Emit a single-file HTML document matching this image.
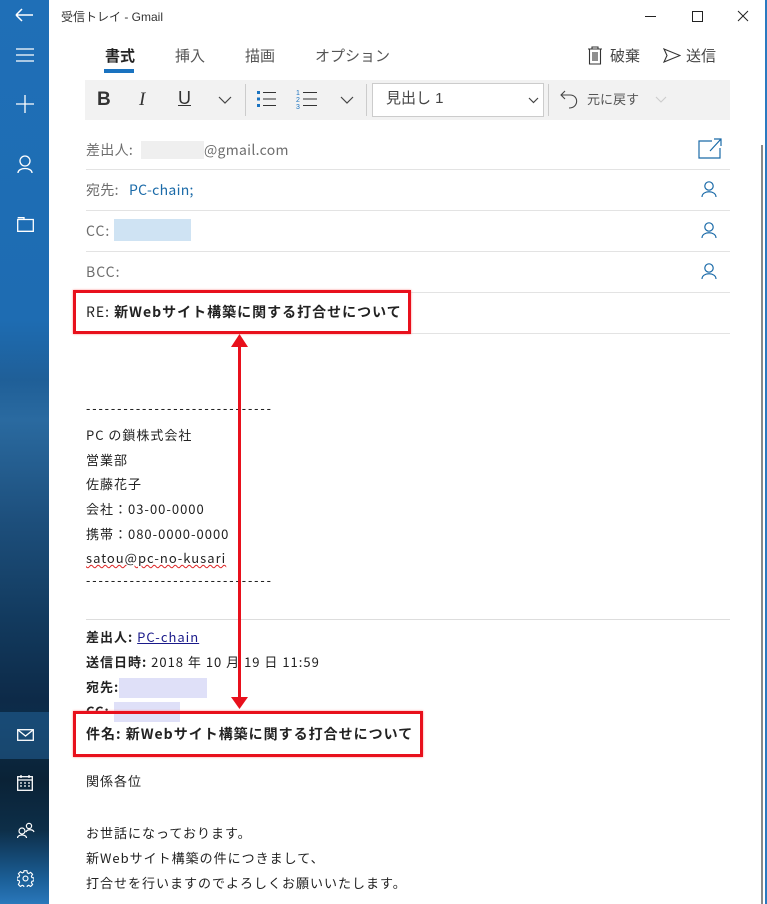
<!DOCTYPE html>
<html><head><meta charset="utf-8"><style>
*{margin:0;padding:0;box-sizing:border-box}
body{width:767px;height:904px;position:relative;overflow:hidden;background:#fff;font-family:"Liberation Sans","Noto Sans CJK JP",sans-serif;color:#222}
.a{position:absolute;white-space:nowrap;line-height:1.2}
.j{font-family:"Noto Sans CJK JP",sans-serif;line-height:1.2;letter-spacing:1px;margin-top:2px}
#side{position:absolute;left:0;top:0;width:49px;height:904px;background:linear-gradient(#1f6fb7 0,#1e6cb2 320px,#1f5f98 380px,#2a6aa0 420px,#1d4f7c 520px,#123a5e 620px,#0d2a48 700px,#0c2d4a 720px,#0a2236 780px,#0d2e48 830px,#1b5f98 880px,#2a78bb 904px)}
#side .mail{position:absolute;left:0;top:712px;width:49px;height:47px;background:rgba(40,110,170,.45)}
svg{position:absolute}
.lbl{color:#6d6d6d;font-size:14px}
.line{position:absolute;left:86px;width:644px;height:1px;background:#e3e3e3}
.body{font-size:13px;color:#222}
.rb{position:absolute;border:3px solid #e8101c;box-shadow:0 0 2px #f88}
.blur{position:absolute;background:#dfe0f8}
.dash{letter-spacing:1.9px}
</style></head><body>
<div id="side"><div class="mail"></div></div>
<svg style="left:14px;top:7px" width="22" height="16" viewBox="0 0 22 16"><path d="M2 8H19M2 8L8 2M2 8L8 14" stroke="#fff" stroke-width="1.5" fill="none"/></svg>
<svg style="left:16px;top:48px" width="18" height="14"><path d="M0 1H18M0 7H18M0 13H18" stroke="#fff" stroke-width="1.3"/></svg>
<svg style="left:16px;top:95px" width="18" height="18"><path d="M9 0V18M0 9H18" stroke="#fff" stroke-width="1.3"/></svg>
<svg style="left:17px;top:155px" width="16" height="18"><circle cx="8" cy="6" r="5" stroke="#fff" stroke-width="1.3" fill="none"/><path d="M1 18C1 12 15 12 15 18" stroke="#fff" stroke-width="1.3" fill="none"/></svg>
<svg style="left:17px;top:217px" width="17" height="15"><path d="M0.7 2.5H16.3V14.3H0.7ZM0.7 0.7H7V2.5" stroke="#fff" stroke-width="1.3" fill="none"/></svg>
<svg style="left:17px;top:729px" width="17" height="12"><rect x="0.7" y="0.7" width="15.6" height="10.6" stroke="#fff" stroke-width="1.3" fill="none"/><path d="M1 1L8.5 7L16 1" stroke="#fff" stroke-width="1.3" fill="none"/></svg>
<svg style="left:17px;top:775px" width="16" height="16"><rect x="0.7" y="1.7" width="14.6" height="13.6" stroke="#fff" stroke-width="1.3" fill="none"/><path d="M1 5H15M4 0V3M12 0V3" stroke="#fff" stroke-width="1.3"/><path d="M3 8h2M7 8h2M11 8h2M3 11h2M7 11h2M11 11h2" stroke="#fff" stroke-width="1.3"/></svg>
<svg style="left:17px;top:822px" width="18" height="16"><circle cx="5" cy="9" r="3" stroke="#fff" stroke-width="1.2" fill="none"/><path d="M0.5 16C0.5 12 9.5 12 9.5 16" stroke="#fff" stroke-width="1.2" fill="none"/><circle cx="12" cy="4" r="2.6" stroke="#fff" stroke-width="1.2" fill="none"/><path d="M9 10C10 7 16 7 17 10" stroke="#fff" stroke-width="1.2" fill="none"/></svg>
<svg style="left:17px;top:870px" width="17" height="17" viewBox="0 0 24 24"><path d="M12 8.5a3.5 3.5 0 1 0 0 7 3.5 3.5 0 0 0 0-7zM10 1h4l.6 3 2 1 2.6-1.7 2.8 2.8L20.3 8.7l.8 2 2.9.6v4l-2.9.6-.8 2 1.7 2.6-2.8 2.8-2.6-1.7-2 .8-.6 3h-4l-.6-3-2-.8-2.6 1.7-2.8-2.8L3.7 17l-.8-2L0 14.4v-4l2.9-.6.8-2L2 5.2 4.8 2.4 7.4 4.1l2-.8z" stroke="#fff" stroke-width="1.6" fill="none"/></svg>
<div style="position:absolute;left:765px;top:0;width:2px;height:904px;background:#2a7ac0"></div>
<div style="position:absolute;left:761px;top:145px;width:2px;height:759px;background:#8a8a8a"></div>
<div class="a" style="left:61px;top:10px;font-size:12px;color:#333">受信トレイ - Gmail</div>
<svg style="left:645px;top:9px" width="110" height="14"><path d="M0 7.5H11" stroke="#222"/><rect x="47.5" y="2.5" width="10" height="10" stroke="#222" fill="none"/><path d="M93 2L103 12M103 2L93 12" stroke="#222"/></svg>
<div class="a" style="left:105px;top:48px;font-size:15px;font-weight:bold;color:#222">書式</div>
<div style="position:absolute;left:104px;top:69px;width:30px;height:4px;background:#1a73c0"></div>
<div class="a" style="left:175px;top:48px;font-size:15px;color:#555">挿入</div>
<div class="a" style="left:245px;top:48px;font-size:15px;color:#555">描画</div>
<div class="a" style="left:315px;top:48px;font-size:15px;color:#555">オプション</div>
<svg style="left:588px;top:46px" width="14" height="19"><path d="M0 3H14M4 3V1H10V3M1.5 3V18H12.5V3M5 6V15M7 6V15M9 6V15" stroke="#333" stroke-width="1.1" fill="none"/></svg>
<div class="a" style="left:610px;top:48px;font-size:15px;color:#444">破棄</div>
<svg style="left:663px;top:48px" width="18" height="15"><path d="M1 1L17 7.5L1 14L4 7.5Z" stroke="#333" stroke-width="1.1" fill="none"/></svg>
<div class="a" style="left:686px;top:48px;font-size:15px;color:#444">送信</div>
<div style="position:absolute;left:85px;top:80px;width:645px;height:40px;background:#f2f2f2"></div>
<div class="a" style="left:97px;top:89px;font-size:19px;font-weight:bold;color:#333">B</div>
<div class="a" style="left:139px;top:89px;font-size:19px;font-style:italic;font-family:'Liberation Serif',serif;color:#333">I</div>
<div class="a" style="left:178px;top:88px;font-size:18px;color:#333;text-decoration:underline">U</div>
<svg style="left:218px;top:96px" width="14" height="8"><path d="M1 1L7 7L13 1" stroke="#444" stroke-width="1.2" fill="none"/></svg>
<div style="position:absolute;left:245px;top:84px;width:1px;height:32px;background:#ccc"></div>
<svg style="left:257px;top:90px" width="20" height="18"><rect x="0" y="1" width="3" height="3" fill="#1a73c0"/><rect x="0" y="7.5" width="3" height="3" fill="#1a73c0"/><rect x="0" y="14" width="3" height="3" fill="#1a73c0"/><path d="M6 2.5H19M6 9H19M6 15.5H19" stroke="#333"/></svg>
<svg style="left:296px;top:88px" width="22" height="22"><text x="0" y="7" font-size="7" fill="#1a73c0" font-family="Liberation Sans">1</text><text x="0" y="14" font-size="7" fill="#1a73c0" font-family="Liberation Sans">2</text><text x="0" y="21" font-size="7" fill="#1a73c0" font-family="Liberation Sans">3</text><path d="M7 4.5H21M7 11H21M7 17.5H21" stroke="#333"/></svg>
<svg style="left:340px;top:96px" width="14" height="8"><path d="M1 1L7 7L13 1" stroke="#444" stroke-width="1.2" fill="none"/></svg>
<div style="position:absolute;left:366px;top:84px;width:1px;height:32px;background:#ccc"></div>
<div style="position:absolute;left:372px;top:83px;width:172px;height:34px;background:#fff;border:1px solid #ccc"></div>
<div class="a" style="left:386px;top:90px;font-size:15px;color:#444">見出し 1</div>
<svg style="left:528px;top:97px" width="11" height="7"><path d="M1 1L5.5 5.5L10 1" stroke="#444" stroke-width="1.2" fill="none"/></svg>
<div style="position:absolute;left:548px;top:84px;width:1px;height:32px;background:#ccc"></div>
<svg style="left:560px;top:89px" width="18" height="20"><path d="M5 2L1 6L5 10M1 6H10C19 6 19 19 9 19" stroke="#444" stroke-width="1.1" fill="none"/></svg>
<div class="a" style="left:587px;top:92px;font-size:13px;color:#555">元に戻す</div>
<svg style="left:655px;top:96px" width="12" height="7"><path d="M1 1L6 6L11 1" stroke="#ccc" stroke-width="1.1" fill="none"/></svg>
<div class="a lbl j" style="left:86px;top:140px;letter-spacing:.3px">差出人:</div>
<div class="blur" style="left:141px;top:141px;width:63px;height:18px;background:#efefef"></div>
<div class="a lbl j" style="left:204px;top:140px;letter-spacing:.3px">@gmail.com</div>
<svg style="left:698px;top:138px" width="24" height="21"><path d="M14 3H1V20H22V10" stroke="#1a6aa8" stroke-width="1.2" fill="none"/><path d="M12 13L23 1M16 1H23V8" stroke="#1a6aa8" stroke-width="1.2" fill="none"/></svg>
<div class="line" style="top:169px"></div>
<div class="a lbl j" style="left:86px;top:180px;letter-spacing:.3px">宛先:</div>
<div class="a j" style="left:129px;top:180px;font-size:14px;color:#1a6aa8;letter-spacing:.3px">PC-chain;</div>
<div class="line" style="top:210px"></div>
<div class="a lbl j" style="left:86px;top:221px">CC:</div>
<div class="blur" style="left:114px;top:219px;width:77px;height:22px;background:#cfe3f3"></div>
<div class="line" style="top:251px"></div>
<div class="a lbl j" style="left:86px;top:262px">BCC:</div>
<div class="line" style="top:292px"></div>
<div class="line" style="top:333px"></div>
<svg style="left:700px;top:181px" width="18" height="60"><g stroke="#1a6aa8" stroke-width="1.2" fill="none"><circle cx="9" cy="5" r="4.2"/><path d="M2 16C2 9 16 9 16 16"/><circle cx="9" cy="46" r="4.2"/><path d="M2 57C2 50 16 50 16 57"/></g></svg>
<svg style="left:700px;top:263px" width="18" height="18"><g stroke="#1a6aa8" stroke-width="1.2" fill="none"><circle cx="9" cy="5" r="4.2"/><path d="M2 16C2 9 16 9 16 16"/></g></svg>
<div class="a j" style="left:86px;top:302px;font-size:14px;color:#222">RE: <b>新Webサイト構築に関する打合せについて</b></div>
<div class="rb" style="left:73px;top:290px;width:338px;height:44px"></div>
<div class="a body dash" style="left:86px;top:401px">------------------------------</div>
<div class="a body j" style="left:86px;top:425px">PC の鎖株式会社</div>
<div class="a body j" style="left:86px;top:450px">営業部</div>
<div class="a body j" style="left:86px;top:474px">佐藤花子</div>
<div class="a body j" style="left:86px;top:499px">会社：03-00-0000</div>
<div class="a body j" style="left:86px;top:524px">携帯：080-0000-0000</div>
<div class="a body j" style="left:86px;top:548px;text-decoration:underline wavy #d22;text-decoration-thickness:1px">satou@pc-no-kusari</div>
<div class="a body dash" style="left:86px;top:573px">------------------------------</div>
<div class="line" style="top:619px;background:#ddd"></div>
<div class="a body j" style="left:86px;top:627px"><b>差出人:</b> <span style="color:#1a1a8a;text-decoration:underline">PC-chain</span></div>
<div class="a body j" style="left:86px;top:652px"><b>送信日時:</b> 2018 年 10 月 19 日 11:59</div>
<div class="a body j" style="left:86px;top:677px"><b>宛先:</b></div>
<div class="blur" style="left:119px;top:678px;width:88px;height:20px"></div>
<div class="a body j" style="left:86px;top:701px;height:11px;overflow:hidden"><b>CC:</b></div>
<div class="blur" style="left:114px;top:702px;width:66px;height:20px"></div>
<div class="a j" style="left:86px;top:724px;font-size:14px;font-weight:bold">件名: 新Webサイト構築に関する打合せについて</div>
<div class="rb" style="left:73px;top:711px;width:350px;height:46px"></div>
<div class="a body j" style="left:86px;top:771px">関係各位</div>
<div class="a body j" style="left:86px;top:823px">お世話になっております。</div>
<div class="a body j" style="left:86px;top:848px">新Webサイト構築の件につきまして、</div>
<div class="a body j" style="left:86px;top:873px">打合せを行いますのでよろしくお願いいたします。</div>
<div style="position:absolute;left:238px;top:345px;width:3px;height:355px;background:#e8101c"></div>
<svg style="left:231px;top:334px" width="17" height="13"><path d="M8.5 0L17 13H0Z" fill="#e8101c"/></svg>
<svg style="left:231px;top:697px" width="17" height="12"><path d="M0 0H17L8.5 12Z" fill="#e8101c"/></svg>
</body></html>
